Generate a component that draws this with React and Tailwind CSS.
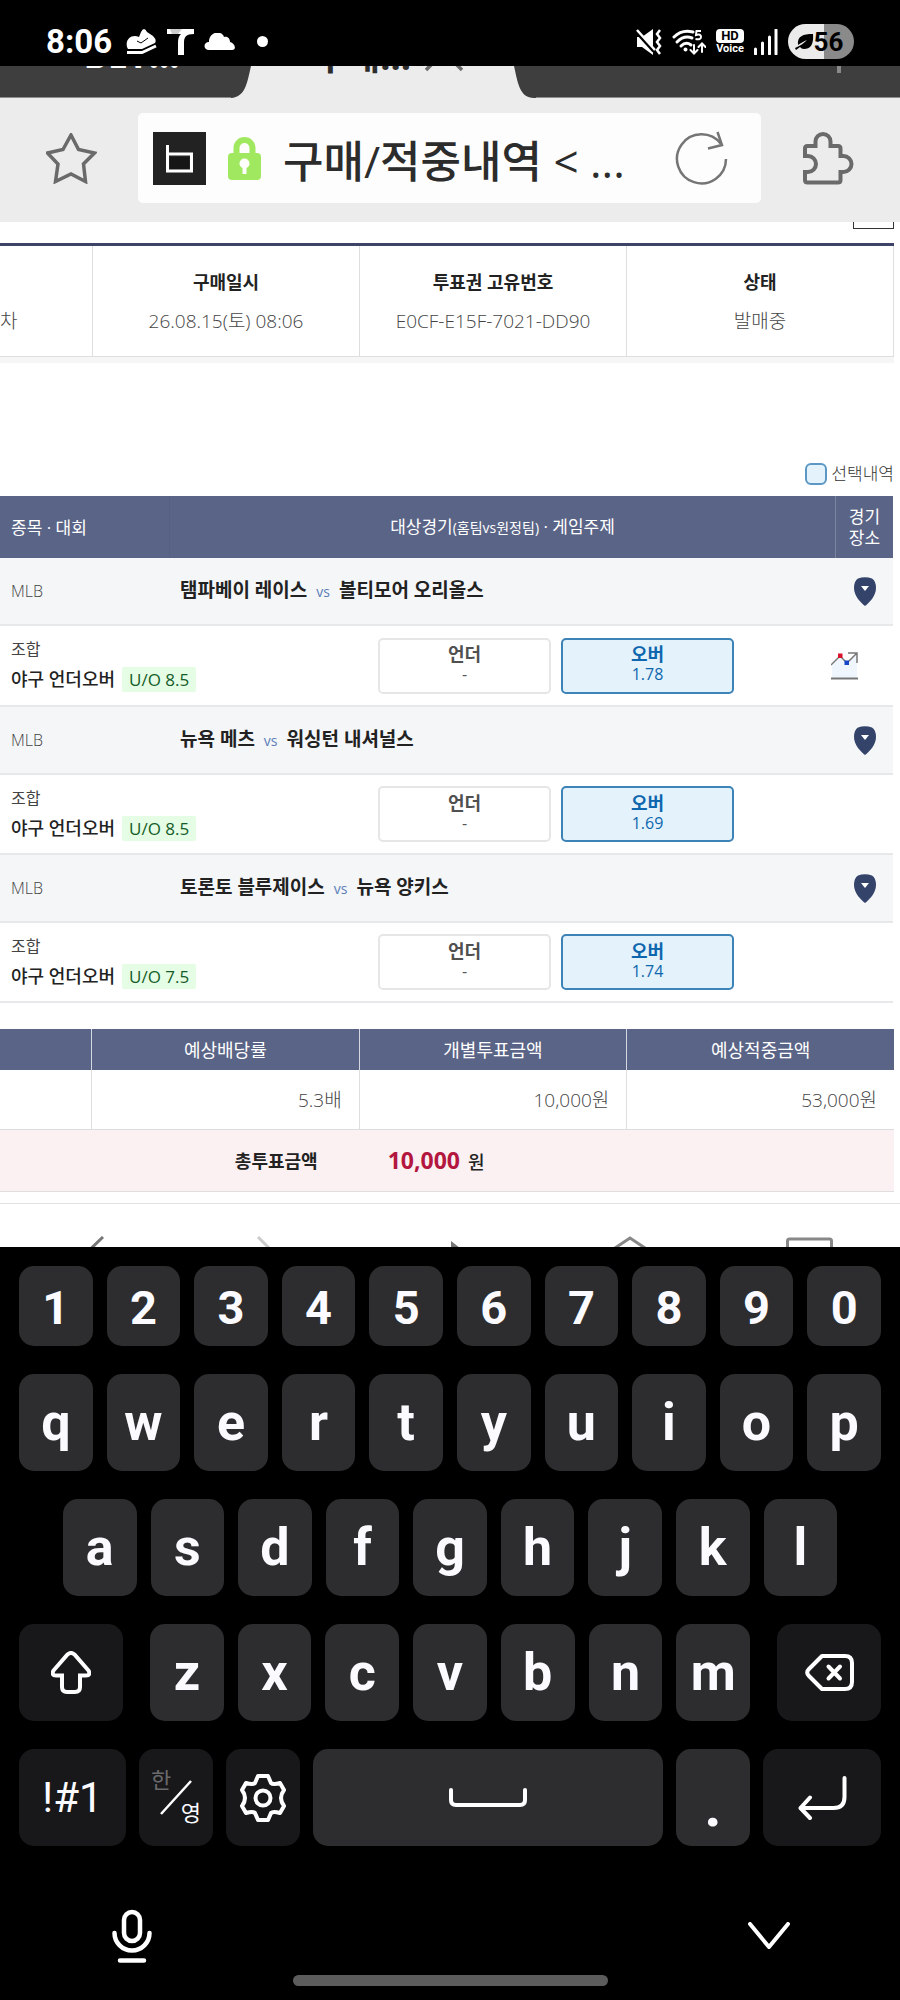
import { useState } from "react";

const games = [
  { id: 1, league: "MLB", home: "탬파베이 레이스", away: "볼티모어 오리올스", line: "U/O 8.5", over: "1.78", trend: true },
  { id: 2, league: "MLB", home: "뉴욕 메츠", away: "워싱턴 내셔널스", line: "U/O 8.5", over: "1.69", trend: false },
  { id: 3, league: "MLB", home: "토론토 블루제이스", away: "뉴욕 양키스", line: "U/O 7.5", over: "1.74", trend: false },
];

const numberKeys = ["1", "2", "3", "4", "5", "6", "7", "8", "9", "0"];
const topKeys = ["q", "w", "e", "r", "t", "y", "u", "i", "o", "p"];
const middleKeys = ["a", "s", "d", "f", "g", "h", "j", "k", "l"];
const bottomKeys = ["z", "x", "c", "v", "b", "n", "m"];

function StatusBar() {
  return (
    <div className="flex h-[66px] items-center justify-between bg-black pt-[17px] pr-[46px] pl-[46px] font-[Roboto,sans-serif] text-white">
      <div className="flex items-center">
        <span className="w-[80px] text-[33px] leading-[36px] font-bold">8:06</span>
        <svg width="31" height="27" viewBox="0 0 31 27" className="mr-[10px]">
          <path d="M1 19 C-1 11 6 6 13 9 L15 4 Q18 -2 21 4 L27 8 Q31 12 29 15 L16 21 H2 Z" fill="#fff" />
          <path d="M11 13 L15 15 L22 10" fill="none" stroke="#000" strokeWidth="1" />
          <path d="M1 24.5 H16 L30 18" fill="none" stroke="#fff" strokeWidth="3" />
        </svg>
        <svg width="27" height="26" viewBox="0 0 27 26" className="mr-[10px]">
          <path d="M0 0 H27 V5 C19 5 17 8 17 14 V26 H11 V14 C11 9 12 7 14 5 H0 Z" fill="#fff" />
          <path d="M3 0 H15 L11 5 H5 Z" fill="#999" opacity="0.5" />
        </svg>
        <svg width="31" height="17" viewBox="0 0 31 17" className="mr-[22px]">
          <path d="M5 17 C-1 17 -1 9 5 9 C5 -2 18 -3 20 4 C24 3 26 6 26 9 C31 10 33 17 28 17 Z" fill="#fff" />
        </svg>
        <span className="size-[11px] rounded-full bg-white" />
      </div>
      <div className="flex items-center gap-[10px]">
        <svg width="26" height="26" viewBox="0 0 26 26">
          <path d="M1 8 H6 L17 0 V26 L6 18 H1 Z" fill="#fff" />
          <path d="M0 2 L18 22" stroke="#000" strokeWidth="4" />
          <path d="M1 1 L19 21" stroke="#fff" strokeWidth="2.5" />
          <path d="M24 1 L21 5 L24 9 L21 13 L24 17 L21 21 L24 25" fill="none" stroke="#fff" strokeWidth="2.5" />
        </svg>
        <svg width="34" height="26" viewBox="0 0 34 26">
          <g fill="none" stroke="#fff" strokeWidth="3" strokeLinecap="round">
            <path d="M2 8 Q10 0 21 3" />
            <path d="M5 13 Q12 6 20 9" />
            <path d="M9 17 Q14 12 19 16" />
            <path d="M22 16 V24 M18.500 21 L22 24.500 L25.500 21 M30 23 V15 M26.500 18 L30 14.500 L33.500 18" strokeWidth="2" />
          </g>
          <circle cx="13.500" cy="20.500" r="2" fill="#fff" />
          <path d="M29 2 H24.500 L24 6 Q29 4.500 29 8 Q29 11 23.500 10" fill="none" stroke="#fff" strokeWidth="2" />
        </svg>
        <span className="flex w-[28px] flex-col items-center text-[11px] leading-[12px] font-bold">
          <span className="w-full rounded-[4px] bg-white text-center text-[13px] leading-[14px] text-black">HD</span>
          <span>Voice</span>
        </span>
        <svg width="24" height="26" viewBox="0 0 24 26">
          <path d="M1.500 25 V20 M8.500 25 V14 M15.500 25 V8 M22 25 V1" stroke="#fff" strokeWidth="3" strokeLinecap="round" />
        </svg>
        <span className="flex h-[35px] w-[66px] items-center justify-center rounded-full bg-linear-to-r from-[#ebebeb] from-55% to-[#8a8a8a] to-55% pr-1 text-[26px] leading-[30px] font-bold text-black">
          <svg width="19" height="18" viewBox="0 0 19 18">
            <path d="M18 1 C19 12 15 16 9 16 C7 16 6 15 5 14 L1 17 L0 15 C5 13 9 10 12 7 C9 8 6 10 3 12 C2 3 8 1 18 1 Z" fill="#000" />
          </svg>
          56
        </span>
      </div>
    </div>
  );
}

function TabStrip() {
  return (
    <div className="flex h-[32px] items-end overflow-hidden bg-[#ececec]">
      <div className="flex h-[32px] w-[231px] items-end justify-center overflow-hidden border-b border-[#8c8c8c] bg-[#3e3e3e] pb-[19px] pl-[32px] font-['Open_Sans',sans-serif] text-[36px] leading-[46px] font-bold text-white">
        BET...
      </div>
      <svg width="20" height="32" viewBox="0 0 20 32" className="shrink-0">
        <path d="M0 0 H20 C16 18 14 31 0 32 Z" fill="#3e3e3e" />
      </svg>
      <div className="flex h-[32px] w-[263px] items-end overflow-hidden pb-[18px] pl-[63px] font-['Open_Sans','Noto_Sans_CJK_KR',sans-serif] text-[36px] leading-[46px] font-bold text-[#2c2c2c]">
        <span className="w-[110px]">구매...</span>
        <svg width="40" height="40" viewBox="0 0 40 40" className="mb-[8px] shrink-0">
          <path d="M2 2 L38 38 M38 2 L2 38" stroke="#6b6b6b" strokeWidth="3.500" />
        </svg>
      </div>
      <svg width="22" height="32" viewBox="0 0 22 32" className="shrink-0">
        <path d="M0 0 C4 18 6 32 20 32 H22 V0 Z" fill="#3e3e3e" />
      </svg>
      <div className="flex h-[32px] flex-1 justify-end border-b border-[#8c8c8c] bg-[#3e3e3e] pr-[59px]">
        <span className="h-[7px] w-[4px] bg-[#8a8a8a]" />
      </div>
    </div>
  );
}

function AddressBar() {
  const [title, setTitle] = useState("구매/적중내역 < ...");

  return (
    <div className="flex h-[124px] items-center justify-between bg-[#ececec] px-[46px] pb-[4px]">
      <button type="button" aria-label="즐겨찾기">
        <svg width="51" height="51" viewBox="0 0 51 51">
          <path
            d="M25 2 L32.500 16.500 L48.500 20 L37.500 31 L39.500 48.500 L25 41 L9.500 48.500 L12 31 L1.500 20 L17 16.500 Z"
            fill="none"
            stroke="#6a6a6a"
            strokeWidth="3.500"
          />
        </svg>
      </button>
      <div className="mx-[41px] flex h-[90px] min-w-0 flex-1 items-center rounded-[5px] bg-[#fdfdfd] pr-[32px] pl-[15px]">
        <svg width="53" height="53" viewBox="0 0 53 53" className="shrink-0">
          <rect width="53" height="53" fill="#222" />
          <rect x="17" y="25" width="19" height="12" fill="#151515" />
          <path d="M14.500 13 V39 H38.500 V22 H15" fill="none" stroke="#fff" strokeWidth="3" />
        </svg>
        <svg width="33" height="43" viewBox="0 0 33 43" className="mx-[22px] shrink-0">
          <path d="M8.500 18 V11 a8 8 0 0 1 16 0 V18" fill="none" stroke="#a0e860" strokeWidth="6" />
          <rect y="16" width="33" height="27" rx="4" fill="#a0e860" />
          <circle cx="16.500" cy="26.500" r="5" fill="#fff" />
          <path d="M14.500 28 H18.500 V37 H14.500 Z" fill="#fff" />
        </svg>
        <input
          aria-label="주소"
          value={title}
          onChange={(e) => setTitle(e.target.value)}
          className="min-w-0 flex-1 bg-transparent pt-[6px] font-['Open_Sans','Noto_Sans_CJK_KR',sans-serif] text-[44px] leading-[60px] font-medium text-[#2c2c2c] outline-none"
        />
        <button type="button" aria-label="새로고침">
          <svg width="54" height="54" viewBox="0 0 54 54" fill="none" stroke="#757575" strokeWidth="2.500">
            <path d="M51 28 A24.500 24.500 0 1 1 46 13" />
            <path d="M42.500 1 L47 14 L33 17.500" />
          </svg>
        </button>
      </div>
      <button type="button" aria-label="확장 기능">
        <svg width="52" height="53" viewBox="0 0 52 53">
          <path
            d="M5.500 14 H13.500 V9.500 a7.500 7.500 0 0 1 15 0 V14 H36 q2.500 0 2.500 2.500 V24 h3 a8 8 0 0 1 0 16 h-3 V48 q0 2.500 -2.500 2.500 H5.500 q-2.500 0 -2.500 -2.500 V40 h3 a8 8 0 0 0 0 -16 h-3 V16.500 q0 -2.500 2.500 -2.500 Z"
            fill="none"
            stroke="#6a6a6a"
            strokeWidth="4"
          />
        </svg>
      </button>
    </div>
  );
}

function PurchaseSummary() {
  const headCell = "border-r border-[#dedede] pt-[23px] text-[18px] leading-[26px] font-bold text-[#222]";
  const cell = "border-r border-b border-[#dedede] pt-[13px] pb-[22px] text-[19px] leading-[26px] font-light text-[#444]";

  return (
    <div className="border-t-[3px] border-b-[6px] border-t-[#3d4468] border-b-[#f6f6f6]">
      <table className="w-full table-fixed border-separate border-spacing-0 text-center">
        <colgroup>
          <col className="w-[93px]" />
          <col />
          <col />
          <col />
        </colgroup>
        <thead>
          <tr>
            <th className={headCell}></th>
            <th className={headCell}>구매일시</th>
            <th className={headCell}>투표권 고유번호</th>
            <th className={headCell}>상태</th>
          </tr>
        </thead>
        <tbody>
          <tr>
            <td className={cell + " text-left"}>차</td>
            <td className={cell}>26.08.15(토) 08:06</td>
            <td className={cell}>E0CF-E15F-7021-DD90</td>
            <td className={cell}>발매중</td>
          </tr>
        </tbody>
      </table>
    </div>
  );
}

function GameRows({ game }) {
  return (
    <>
      <tr className="h-[68px] bg-[#f4f6f8]">
        <td className="border-b-2 border-[#e6e8ea] pl-[11px] text-[16px] font-light text-[#444]">{game.league}</td>
        <td className="border-b-2 border-[#e6e8ea] pl-[11px] text-[19px] leading-[26px] font-bold text-[#222]">
          {game.home}
          <span className="px-[9px] text-[14px] font-normal text-[#5c7fb8]">vs</span>
          {game.away}
        </td>
        <td className="border-b-2 border-[#e6e8ea] text-center">
          <button type="button" aria-label="경기장소" className="block w-full">
            <svg width="22" height="29" viewBox="0 0 22 29" className="mx-auto">
              <path d="M4 1.500 Q11 -1 18 1.500 Q22 4 22 11 C22 19 15 26 11 29 C7 26 0 19 0 11 Q0 4 4 1.500 Z" fill="#34436a" />
              <path d="M7 9 H15 L11 14 Z" fill="#fff" />
            </svg>
          </button>
        </td>
      </tr>
      <tr className={game.trend ? "h-[81px] bg-white" : "h-[80px] bg-white"}>
        <td colSpan={3} className="border-b-2 border-[#e6e8ea]">
          <div className="flex items-center">
            <div className="flex-1 pb-[2px] pl-[11px]">
              <p className="text-[16px] leading-[24px] text-[#444]">조합</p>
              <p className="flex items-center gap-[7px] pt-[6px] text-[18px] leading-[25px] font-medium text-[#222]">
                야구 언더오버
                <span className="rounded-[2px] bg-[#e5fce5] px-[7px] text-[17px] text-[#145c28]">{game.line}</span>
              </p>
            </div>
            <button type="button" className="h-[56px] w-[173px] rounded-[5px] border-2 border-[#e6e6e6] bg-white pb-[3px]">
              <span className="block text-[18px] leading-[20px] font-bold text-[#505050]">언더</span>
              <span className="block text-[16px] leading-[20px] text-[#555]">-</span>
            </button>
            <button type="button" className="ml-[10px] h-[56px] w-[173px] rounded-[5px] border-2 border-[#3c83b8] bg-[#e4f2fb] pb-[3px]">
              <span className="block text-[18px] leading-[20px] font-bold text-[#0d66ae]">오버</span>
              <span className="block text-[16px] leading-[20px] text-[#0d66ae]">{game.over}</span>
            </button>
            <div className="w-[159px] pl-[97px]">
              {game.trend && (
                <button type="button" aria-label="배당률 추이" className="block">
                  <svg width="27" height="28" viewBox="0 0 27 28">
                    <path d="M1 14 L9 5 L16 11 L26 2 V26 H1 Z" fill="#eff6fd" />
                    <path d="M0 13 L9 4 L16 11 L26 1 M17 1 H26 V11" fill="none" stroke="#777" strokeWidth="1.500" />
                    <path d="M0 26.500 H27" stroke="#777" strokeWidth="2" />
                    <rect x="7" y="1.500" width="4.500" height="4.500" fill="#d8142c" />
                    <rect x="13.500" y="8.500" width="4.500" height="4.500" fill="#1747c8" />
                  </svg>
                </button>
              )}
            </div>
          </div>
        </td>
      </tr>
    </>
  );
}

function GameTable() {
  return (
    <table className="w-full table-fixed border-separate border-spacing-0 pr-px">
      <colgroup>
        <col className="w-[169px]" />
        <col />
        <col className="w-[57px]" />
      </colgroup>
      <thead>
        <tr className="h-[62px] bg-[#5a6486] text-[17px] leading-[21px] text-white">
          <th className="pl-[11px] text-left font-normal">종목 · 대회</th>
          <th className="border-r border-l border-l-[#556083] border-r-[#7b84a0] font-normal">
            대상경기<span className="text-[14px]">(홈팀vs원정팀)</span> · 게임주제
          </th>
          <th className="font-normal">
            경기
            <br />
            장소
          </th>
        </tr>
      </thead>
      <tbody>
        {games.map((game) => (
          <GameRows key={game.id} game={game} />
        ))}
      </tbody>
    </table>
  );
}

function TotalTable() {
  const headCell = "border-l border-[#d5d8e2] bg-[#5a6486] text-[18px] leading-[26px] font-normal text-white";
  const cell = "border-l border-b border-[#dedede] pr-[17px] text-[19px] leading-[26px] font-light text-[#444]";

  return (
    <table className="mt-[26px] w-full table-fixed border-separate border-spacing-0">
      <colgroup>
        <col className="w-[91px]" />
        <col />
        <col />
        <col />
      </colgroup>
      <thead>
        <tr className="h-[41px]">
          <th className="bg-[#5a6486]"></th>
          <th className={headCell}>예상배당률</th>
          <th className={headCell}>개별투표금액</th>
          <th className={headCell}>예상적중금액</th>
        </tr>
      </thead>
      <tbody>
        <tr className="h-[60px] text-right">
          <td className="border-b border-[#dedede]"></td>
          <td className={cell}>5.3배</td>
          <td className={cell}>10,000원</td>
          <td className={cell}>53,000원</td>
        </tr>
        <tr className="h-[62px] bg-[#fbf0f2]">
          <th colSpan={2} className="border-b border-[#dedede] pr-[41px] text-right text-[18px] leading-[26px] font-bold text-[#222]">
            총투표금액
          </th>
          <td colSpan={2} className="border-b border-[#dedede] pl-[29px] text-[18px] leading-[26px] font-medium text-[#222]">
            <strong className="mr-2 text-[23px] font-bold text-[#b3173f]">10,000</strong>원
          </td>
        </tr>
      </tbody>
    </table>
  );
}

function BrowserNav() {
  return (
    <nav className="mt-[11px] flex h-[44px] items-start overflow-hidden border-t border-[#e2e2e2] pt-[32px] pr-[67px] pl-[67px]">
      <button type="button" aria-label="뒤로" className="mr-[130px] shrink-0">
        <svg width="37" height="46" viewBox="0 0 37 46">
          <path d="M36 1 L12 24 L36 45" fill="none" stroke="#777" strokeWidth="3" />
        </svg>
      </button>
      <button type="button" aria-label="앞으로" className="shrink-0">
        <svg width="40" height="46" viewBox="0 0 40 46">
          <path d="M24 1 L39 16" fill="none" stroke="#ccc" strokeWidth="3" />
        </svg>
      </button>
      <button type="button" aria-label="재생" className="ml-[176px] shrink-0">
        <svg width="30" height="46" viewBox="0 0 30 46">
          <path d="M1 5 L28 26 L1 44 Z" fill="#777" />
        </svg>
      </button>
      <button type="button" aria-label="홈" className="ml-auto shrink-0">
        <svg width="50" height="46" viewBox="0 0 50 46">
          <path d="M1 18 L25 2 L49 18 V45 H1 Z" fill="none" stroke="#888" strokeWidth="3" />
        </svg>
      </button>
      <button type="button" aria-label="탭 목록" className="ml-[131px] shrink-0">
        <svg width="47" height="46" viewBox="0 0 47 46">
          <rect x="1.500" y="3" width="44" height="41" rx="2" fill="none" stroke="#888" strokeWidth="3" />
        </svg>
      </button>
    </nav>
  );
}

function Key({ children, label, className = "flex-1 bg-[#2d2d2f] text-[52px] font-bold" }) {
  return (
    <button
      type="button"
      aria-label={label}
      className={"flex h-[97px] items-center justify-center rounded-[15px] leading-[60px] " + className}
    >
      {children}
    </button>
  );
}

function Keyboard() {
  return (
    <div className="bg-black pt-[19px] pb-[14px] font-[Roboto,'Noto_Sans_CJK_KR',sans-serif] text-[#fbfbff]">
      <div className="flex flex-col gap-[28px] px-[19px]">
        <div className="flex gap-[14px]">
          {numberKeys.map((key) => (
            <button
              type="button"
              key={key}
              className="h-[80px] flex-1 rounded-[15px] bg-[#2d2d2f] pt-1 text-[47px] leading-[60px] font-bold"
            >
              {key}
            </button>
          ))}
        </div>
        <div className="flex gap-[14px]">
          {topKeys.map((key) => (
            <Key key={key}>{key}</Key>
          ))}
        </div>
        <div className="flex gap-[14px] px-[44px]">
          {middleKeys.map((key) => (
            <Key key={key}>{key}</Key>
          ))}
        </div>
        <div className="flex gap-[27px]">
          <Key label="Shift" className="w-[104px] bg-[#18181a]">
            <svg width="40" height="43" viewBox="0 0 40 43">
              <path
                d="M16.500 3.500 Q20 0.500 23.500 3.500 L37.500 19.500 Q40 24.500 35 24.500 H29 V36 Q29 41 24 41 H16 Q11 41 11 36 V24.500 H5 Q0 24.500 2.500 19.500 Z"
                fill="none"
                stroke="#fff"
                strokeWidth="4"
              />
            </svg>
          </Key>
          <div className="flex flex-1 gap-[14px]">
            {bottomKeys.map((key) => (
              <Key key={key}>{key}</Key>
            ))}
          </div>
          <Key label="Backspace" className="w-[104px] bg-[#18181a]">
            <svg width="49" height="37" viewBox="0 0 49 37" fill="none" stroke="#fff" strokeWidth="4" strokeLinecap="round">
              <path d="M17 2 H40 Q47 2 47 9 V28 Q47 35 40 35 H17 L4 22 Q0.500 18.500 4 15 Z" strokeLinejoin="round" />
              <path d="M23.500 12.500 L35 24.500 M35 12.500 L23.500 24.500" />
            </svg>
          </Key>
        </div>
        <div className="flex gap-[13px]">
          <Key className="w-[107px] bg-[#18181a] text-[42px]">!#1</Key>
          <Key label="한/영" className="relative w-[74px] bg-[#18181a] text-[22px]">
            <span className="absolute top-[18px] left-[12px] leading-[28px] text-[#6a6a6c]">한</span>
            <svg width="32" height="35" viewBox="0 0 32 35">
              <path d="M1 34 L31 1" stroke="#fff" strokeWidth="2.500" />
            </svg>
            <span className="absolute right-[12px] bottom-[18px] leading-[28px]">영</span>
          </Key>
          <Key label="설정" className="w-[74px] bg-[#18181a]">
            <svg width="48" height="50" viewBox="-24 -25 48 50" fill="none" stroke="#fff" strokeWidth="4" strokeLinejoin="round">
              <path d="M-5 -22 H5 L8 -15 Q10 -13 17 -15 L21 -8 Q15 0 21 8 L17 15 Q10 13 8 15 L5 22 H-5 L-8 15 Q-10 13 -17 15 L-21 8 Q-15 0 -21 -8 L-17 -15 Q-10 -13 -8 -15 Z" />
              <circle r="7.500" />
            </svg>
          </Key>
          <Key label="Space" className="flex-1 bg-[#2d2d2f]">
            <svg width="78" height="19" viewBox="0 0 78 19">
              <path d="M2 2 V12 Q2 17 7 17 H71 Q76 17 76 12 V2" fill="none" stroke="#fff" strokeWidth="4" strokeLinecap="round" />
            </svg>
          </Key>
          <Key className="w-[74px] bg-[#2d2d2f] pt-4 text-[60px] font-bold">.</Key>
          <Key label="Enter" className="w-[118px] bg-[#18181a]">
            <svg width="49" height="44" viewBox="0 0 49 44" fill="none" stroke="#fff" strokeWidth="4" strokeLinecap="round">
              <path d="M46.500 2 V21 Q46.500 32 35.500 32 H3" />
              <path d="M12 21.500 L2.500 32 L12 42" strokeLinejoin="round" />
            </svg>
          </Key>
        </div>
      </div>
      <div className="flex items-center justify-between pt-[63px] pr-[110px] pl-[112px]">
        <button type="button" aria-label="음성 입력">
          <svg width="40" height="54" viewBox="0 0 40 54" fill="none" stroke="#fff" strokeWidth="4.500" strokeLinecap="round">
            <rect x="12" y="3" width="16" height="29" rx="8" />
            <path d="M2.500 24 a17.500 17.500 0 0 0 35 0 M8 51.500 H32" />
          </svg>
        </button>
        <button type="button" aria-label="키보드 숨기기">
          <svg width="42" height="28" viewBox="0 0 42 28">
            <path d="M2 2 L21 25 L40 2" fill="none" stroke="#fff" strokeWidth="4" strokeLinecap="round" strokeLinejoin="round" />
          </svg>
        </button>
      </div>
      <div className="mx-auto mt-[12px] h-[11px] w-[35%] rounded-full bg-[#5c5c5c]" />
    </div>
  );
}

export default function App() {
  return (
    <div className="bg-white">
      <StatusBar />
      <TabStrip />
      <AddressBar />
      <main className="pr-[6px] font-['Open_Sans','Noto_Sans_CJK_KR',sans-serif]">
        <div className="flex justify-end pb-[14px]">
          <div className="h-[7px] w-[41px] border-x border-b border-[#333]" />
        </div>
        <PurchaseSummary />
        <div className="mt-[99px] mb-[10px] flex h-[24px] items-center justify-end gap-[4px] text-[17px] leading-[24px] font-light text-[#333]">
          <span className="size-[22px] rounded-[6px] border-2 border-[#5b98c6] bg-[#e4f2fb]" />
          선택내역
        </div>
        <GameTable />
        <TotalTable />
      </main>
      <BrowserNav />
      <Keyboard />
    </div>
  );
}
